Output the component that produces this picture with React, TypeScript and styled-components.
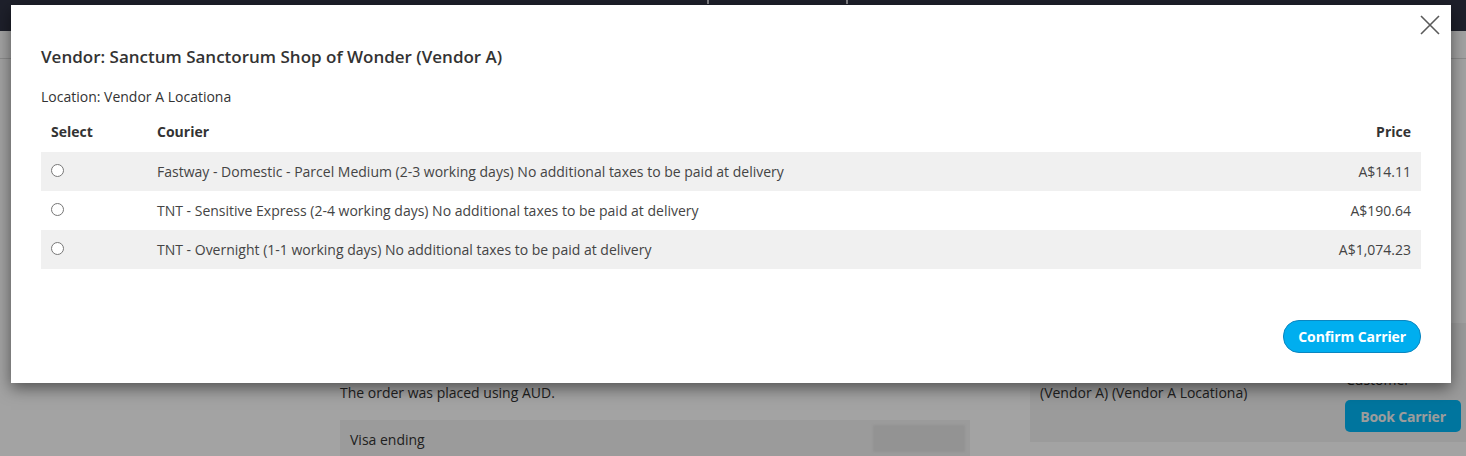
import React from "react";
import styled, { createGlobalStyle } from "styled-components";

const Global = createGlobalStyle`
  html, body { margin: 0; padding: 0; }
  body {
    font-family: "Open Sans", "Liberation Sans", sans-serif;
    background: #ffffff;
    width: 1466px;
    height: 456px;
    overflow: hidden;
    color: #333;
  }
`;

const Page = styled.div`
  position: relative;
  width: 1466px;
  height: 456px;
  overflow: hidden;
  background: #ffffff;
`;

const NavBar = styled.div`
  height: 31px;
  background: #2f3244;
  display: flex;
  align-items: flex-start;
`;

const NavSep = styled.span<{ $left: number }>`
  width: 2px;
  height: 4px;
  background: #c8c8d0;
  margin-left: ${(p) => p.$left}px;
`;

const SubBar = styled.div`
  height: 27px;
  border-bottom: 1px solid #dcdcdc;
`;

const Content = styled.div`
  display: grid;
  grid-template-columns: 340px 630px 60px 436px;
  align-items: start;
  padding-top: 324px;
`;

const Middle = styled.div`
  grid-column: 2;
  display: flex;
  flex-direction: column;
  gap: 17px;
`;

const BgText = styled.div`
  font-size: 14px;
  line-height: 20px;
  color: #333;
`;

const VisaBox = styled.div`
  background: #f2f2f2;
  height: 60px;
  display: flex;
  justify-content: space-between;
  padding: 5px 5px 0 10px;
  box-sizing: border-box;
`;

const VisaLabel = styled.span`
  font-size: 14px;
  line-height: 30px;
  color: #333;
`;

const Blur = styled.span`
  width: 92px;
  height: 27px;
  background: #e6e6e6;
  filter: blur(1px);
`;

const RightBox = styled.div`
  grid-column: 4;
  margin-top: -60px;
  background: #f2f2f2;
  height: 119px;
  display: grid;
  grid-template-columns: 1fr 116px;
  padding: 47px 5px 0 10px;
  box-sizing: border-box;
`;

const RightText = styled.div`
  font-size: 14px;
  line-height: 20px;
  padding-top: 13px;
`;

const RightCol = styled.div`
  display: flex;
  flex-direction: column;
  align-items: flex-start;
  gap: 10px;
  padding-left: 1px;
`;

const BookButton = styled.button`
  align-self: stretch;
  margin-left: -1px;
  background: #00b8f8;
  color: #f4f4f4;
  border: none;
  border-radius: 5px;
  height: 32px;
  padding: 0;
  font-family: "Open Sans", sans-serif;
  font-weight: 700;
  font-size: 14px;
  letter-spacing: -0.2px;
`;

const Backdrop = styled.div`
  position: absolute;
  inset: 0;
  background: rgba(0, 0, 0, 0.36);
`;

const Modal = styled.div`
  position: absolute;
  top: 5px;
  left: 11px;
  width: 1440px;
  height: 378px;
  background: #fff;
  box-shadow: 0 5px 15px rgba(0, 0, 0, 0.5);
  box-sizing: border-box;
  padding: 41px 30px 30px 30px;
  display: flex;
  flex-direction: column;
`;

const Close = styled.button`
  position: absolute;
  top: 10px;
  right: 11px;
  width: 20px;
  height: 20px;
  padding: 0;
  border: none;
  background: transparent;
  display: flex;
`;

const Title = styled.h4`
  margin: 0;
  font-size: 17px;
  line-height: 22px;
  font-weight: 600;
  color: #333;
`;

const Location = styled.p`
  margin: 19px 0 6px;
  font-size: 14px;
  line-height: 20px;
  color: #333;
`;

const Table = styled.table`
  width: 100%;
  border-collapse: collapse;
  font-size: 14px;
`;

const Th = styled.th<{ $align?: string; $w?: number }>`
  text-align: ${(p) => p.$align || "left"};
  font-weight: 700;
  font-size: 14px;
  color: #333;
  height: 39px;
  padding: 0 10px 2px;
  box-sizing: border-box;
  ${(p) => (p.$w ? `width: ${p.$w}px;` : "")}
`;

const Tr = styled.tr<{ $striped: boolean }>`
  background: ${(p) => (p.$striped ? "#f0f0f0" : "#fff")};
`;

const Td = styled.td<{ $align?: string }>`
  text-align: ${(p) => p.$align || "left"};
  height: 39px;
  padding: 0 10px;
  color: #444;
  font-size: 14px;
  vertical-align: middle;
`;

const Radio = styled.input`
  display: block;
  margin: 0 0 2px 0;
  width: 13px;
  height: 13px;
`;

const Footer = styled.div`
  margin-top: auto;
  display: flex;
  justify-content: flex-end;
`;

const ConfirmButton = styled.button`
  background: #00aeef;
  color: #fff;
  border: 1px solid #0b86c0;
  border-radius: 16px;
  height: 33px;
  padding: 0 14px;
  font-family: "Open Sans", sans-serif;
  font-weight: 700;
  font-size: 14px;
  letter-spacing: -0.1px;
`;

const rows = [
  {
    courier:
      "Fastway - Domestic - Parcel Medium (2-3 working days) No additional taxes to be paid at delivery",
    price: "A$14.11",
  },
  {
    courier: "TNT - Sensitive Express (2-4 working days) No additional taxes to be paid at delivery",
    price: "A$190.64",
  },
  {
    courier: "TNT - Overnight (1-1 working days) No additional taxes to be paid at delivery",
    price: "A$1,074.23",
  },
];

export default function App() {
  return (
    <Page>
      <Global />
      <NavBar>
        <NavSep $left={707} />
        <NavSep $left={137} />
      </NavBar>
      <SubBar />
      <Content>
        <Middle>
          <BgText>The order was placed using AUD.</BgText>
          <VisaBox>
            <VisaLabel>Visa ending</VisaLabel>
            <Blur />
          </VisaBox>
        </Middle>
        <RightBox>
          <RightText>(Vendor A) (Vendor A Locationa)</RightText>
          <RightCol>
            <BgText>Customer</BgText>
            <BookButton>Book Carrier</BookButton>
          </RightCol>
        </RightBox>
      </Content>
      <Backdrop />
      <Modal>
        <Close aria-label="Close">
          <svg width="20" height="20" viewBox="0 0 20 20">
            <path d="M1 1 L19 19 M19 1 L1 19" stroke="#5a5a5a" strokeWidth="1.6" fill="none" />
          </svg>
        </Close>
        <Title>Vendor: Sanctum Sanctorum Shop of Wonder (Vendor A)</Title>
        <Location>Location: Vendor A Locationa</Location>
        <Table>
          <thead>
            <tr>
              <Th $w={106}>Select</Th>
              <Th>Courier</Th>
              <Th $align="right">Price</Th>
            </tr>
          </thead>
          <tbody>
            {rows.map((r, i) => (
              <Tr key={i} $striped={i % 2 === 0}>
                <Td>
                  <Radio type="radio" name="carrier" />
                </Td>
                <Td>{r.courier}</Td>
                <Td $align="right">{r.price}</Td>
              </Tr>
            ))}
          </tbody>
        </Table>
        <Footer>
          <ConfirmButton>Confirm Carrier</ConfirmButton>
        </Footer>
      </Modal>
    </Page>
  );
}
